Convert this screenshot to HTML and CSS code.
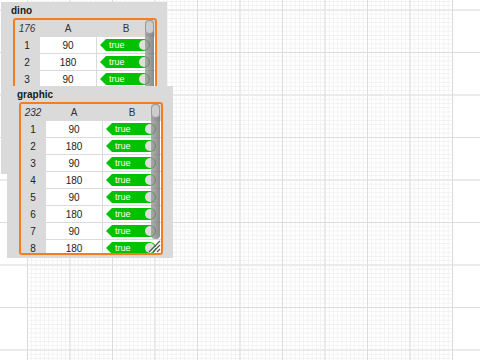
FILE: index.html
```html
<!DOCTYPE html>
<html lang="en">
<head>
  <meta charset="UTF-8" />
  <title>Stage - table watchers</title>
  <link rel="stylesheet" href="styles.css">
</head>
<body>
  <div class="stage">
    <div class="grid-fine"></div>

    <!-- dino watcher (partly covered) -->
    <section class="watcher watcher-dino">
      <div class="watcher-label">dino</div>
      <div class="table-frame">
        <div class="table">
          <div class="cell head idx">176</div>
          <div class="cell head">A</div>
          <div class="cell head">B</div>

          <div class="cell idx">1</div>
          <div class="cell val">90</div>
          <div class="cell bool"><span class="badge"><span>true</span></span></div>

          <div class="cell idx">2</div>
          <div class="cell val">180</div>
          <div class="cell bool"><span class="badge"><span>true</span></span></div>

          <div class="cell idx">3</div>
          <div class="cell val">90</div>
          <div class="cell bool"><span class="badge"><span>true</span></span></div>
        </div>
        <div class="scrollbar"><div class="thumb"></div></div>
      </div>
    </section>

    <!-- graphic watcher -->
    <section class="watcher watcher-graphic">
      <div class="watcher-label">graphic</div>
      <div class="table-frame">
        <div class="table">
          <div class="cell head idx">232</div>
          <div class="cell head">A</div>
          <div class="cell head">B</div>

          <div class="cell idx">1</div>
          <div class="cell val">90</div>
          <div class="cell bool"><span class="badge"><span>true</span></span></div>

          <div class="cell idx">2</div>
          <div class="cell val">180</div>
          <div class="cell bool"><span class="badge"><span>true</span></span></div>

          <div class="cell idx">3</div>
          <div class="cell val">90</div>
          <div class="cell bool"><span class="badge"><span>true</span></span></div>

          <div class="cell idx">4</div>
          <div class="cell val">180</div>
          <div class="cell bool"><span class="badge"><span>true</span></span></div>

          <div class="cell idx">5</div>
          <div class="cell val">90</div>
          <div class="cell bool"><span class="badge"><span>true</span></span></div>

          <div class="cell idx">6</div>
          <div class="cell val">180</div>
          <div class="cell bool"><span class="badge"><span>true</span></span></div>

          <div class="cell idx">7</div>
          <div class="cell val">90</div>
          <div class="cell bool"><span class="badge"><span>true</span></span></div>

          <div class="cell idx">8</div>
          <div class="cell val">180</div>
          <div class="cell bool"><span class="badge"><span>true</span></span></div>
        </div>
        <div class="scrollbar"><div class="thumb"></div></div>
        <svg class="resize-handle" width="14" height="14" viewBox="0 0 14 14">
          <path d="M13 2 L2 13" stroke="#555" stroke-width="1.2"/>
          <path d="M14 3 L3 14" stroke="#fff" stroke-width="1"/>
          <path d="M13 6 L6 13" stroke="#555" stroke-width="1.2"/>
          <path d="M14 7 L7 14" stroke="#fff" stroke-width="1"/>
          <path d="M13 10 L10 13" stroke="#555" stroke-width="1.2"/>
        </svg>
      </div>
    </section>
  </div>
</body>
</html>
```

FILE: styles.css
```css
:root {
  --panel: #dadada;
  --frame: #f47d20;
  --cell: #ffffff;
  --text: #222;
  --green: #00c200;
  --major: #dcdcdc;
  --major-soft: #ebebeb;
  --minor: #f1f1f1;
}
html, body {
  margin: 0;
  padding: 0;
  background: #fff;
  font-family: 'Liberation Sans', Arial, sans-serif;
}
.stage {
  position: relative;
  width: 480px;
  height: 360px;
  overflow: hidden;
  background-color: #fff;
  background-image:
    linear-gradient(to bottom, var(--major-soft) 2px, transparent 2px),
    linear-gradient(to bottom, var(--major) 1px, transparent 1px);
  background-size: 100% 85px, 100% 85px;
  background-position: 0 9px, 0 52px;
}
.grid-fine {
  position: absolute;
  left: 27px;
  top: 0;
  width: 426px;
  height: 360px;
  background-image:
    linear-gradient(to right, var(--major) 1px, transparent 1px),
    linear-gradient(to bottom, var(--major-soft) 2px, transparent 2px),
    linear-gradient(to bottom, var(--major) 1px, transparent 1px),
    linear-gradient(to right, var(--minor) 1px, transparent 1px),
    linear-gradient(to bottom, var(--minor) 1px, transparent 1px);
  background-size: 42.5px 100%, 100% 85px, 100% 85px, 4.25px 4.25px, 4.25px 4.25px;
  background-position: 0 0, 0 9px, 0 52px, 0 0, 0 1px;
}

/* watchers */
.watcher {
  position: absolute;
  width: 166px;
  height: 172px;
  background: var(--panel);
  display: flex;
  flex-direction: column;
  padding: 0 10px 3px 12px;
  box-sizing: border-box;
}
.watcher-dino { left: 1px; top: 2px; }
.watcher-graphic { left: 7px; top: 86px; }
.watcher-label {
  height: 16px;
  line-height: 17px;
  margin-left: -2px;
  font-size: 10px;
  font-weight: 700;
  color: #1a1a1a;
}
.table-frame {
  position: relative;
  flex: 1;
  border: 2px solid var(--frame);
  border-radius: 3px;
  background: var(--panel);
  overflow: hidden;
}
.table {
  display: grid;
  grid-template-columns: 24px 56px 58px;
  grid-auto-rows: 16px;
  gap: 1px;
}
.cell {
  display: flex;
  align-items: center;
  justify-content: center;
  font-size: 10px;
  color: var(--text);
}
.cell.head { color: #333; }
.cell.head.idx { font-style: italic; }
.cell.val,
.cell.bool { background: var(--cell); }
.cell.bool { justify-content: flex-start; }

.badge {
  position: relative;
  display: flex;
  align-items: center;
  width: 50px;
  height: 12px;
  margin-left: 3px;
  background: var(--green);
  border-radius: 0 6px 6px 0;
  clip-path: polygon(0 50%, 6px 0, 100% 0, 100% 100%, 6px 100%);
}
.badge span {
  padding-left: 9px;
  font-size: 9px;
  color: #fff;
  line-height: 12px;
}
.badge::after {
  content: "";
  position: absolute;
  right: 1px;
  top: 1px;
  width: 10px;
  height: 10px;
  border-radius: 50%;
  background: #dedede;
}

.scrollbar {
  position: absolute;
  top: 0;
  right: 1px;
  bottom: 14px;
  width: 9px;
  border-radius: 4px;
  background: linear-gradient(to right, rgba(150,150,150,0.75), rgba(110,110,110,0.8));
}
.thumb {
  height: 14px;
  border-radius: 4px;
  background: #cdcdcd;
  border: 1px solid #9a9a9a;
  box-sizing: border-box;
}
.resize-handle {
  position: absolute;
  right: 0;
  bottom: 0;
}
```
